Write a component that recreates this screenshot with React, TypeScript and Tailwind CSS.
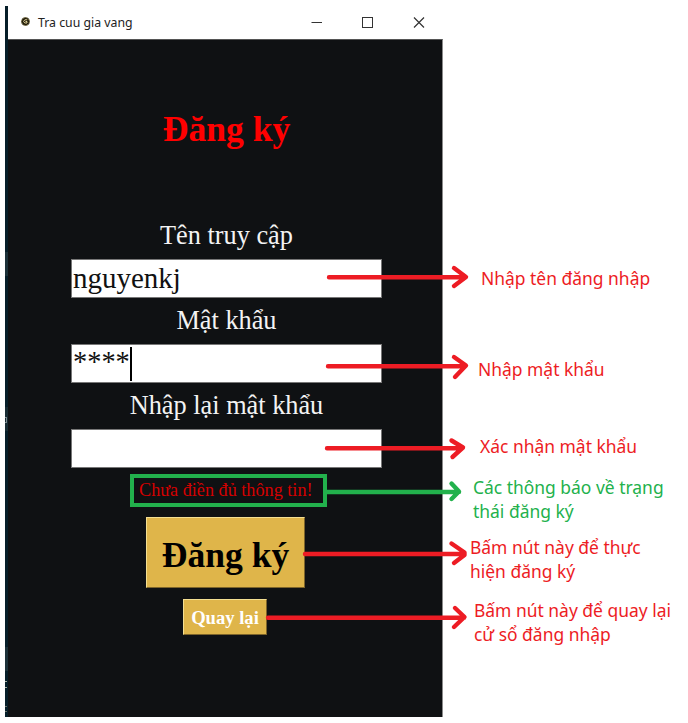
import React from "react";

const serif = "font-['Liberation_Serif',serif]";
const sans = "font-['Noto_Sans','Open_Sans',sans-serif]";

function TitleBar() {
  return (
    <div className="flex h-[33px] items-center bg-white pl-[13px]">
      <svg width="9" height="9" viewBox="0 0 9 9" className="mb-[3px]">
        <circle cx="4.5" cy="4.5" r="4.3" fill="#1b1708" />
        <circle cx="4.5" cy="4.5" r="3.9" fill="none" stroke="#c8b878" strokeWidth="0.7" strokeDasharray="2 1" />
        <path d="M6.3 2.8H3.8L2.6 4.4L3.7 6H6V4.5H4.5" fill="none" stroke="#e5d59b" strokeWidth="1" />
      </svg>
      <span className={`ml-[8px] whitespace-nowrap text-[12.3px] leading-4 text-[#222] ${sans}`}>
        Tra cuu gia vang
      </span>
      <svg width="116" height="12" viewBox="0 0 116 12" className="ml-auto mr-[17px]" fill="none" stroke="#333" strokeWidth="1">
        <path d="M1.5 5.5H12" />
        <rect x="52.5" y="0.5" width="10" height="10" />
        <path d="M104 0.5L114 10.5M114 0.5L104 10.5" strokeWidth="1.2" />
      </svg>
    </div>
  );
}

function Field({ label, children }: { label: string; children?: React.ReactNode }) {
  return (
    <div className="flex flex-col items-center">
      <div className={`flex h-[46px] items-center whitespace-nowrap text-[26.3px] text-[#f3f3f3] ${serif}`}>{label}</div>
      <div className={`flex h-[39px] w-[311px] items-center border border-[#777] bg-white pl-[1px] text-[29px] text-[#111] ${serif}`}>
        {children}
      </div>
    </div>
  );
}

function Note({ lines, className }: { lines: string[]; className: string }) {
  return (
    <div className={`flex flex-col items-start whitespace-nowrap text-[17.45px] leading-6 ${sans} ${className}`}>
      {lines.map((line) => (
        <span key={line}>{line}</span>
      ))}
    </div>
  );
}

function Arrows() {
  return (
    <svg className="pointer-events-none absolute left-0 top-0" width="688" height="723" fill="none" stroke="#ed1c24" strokeWidth="4.4" strokeLinecap="round" strokeLinejoin="round">
      <path d="M329 277.3H465M454 268L466 277L454 286" />
      <path d="M328 366.3H461M454 357L466 365.5L455 377" />
      <path d="M327 448.3H462M451.500 440.500L463 447.5L452.500 457" />
      <path d="M327 492H459M451.500 483.500L459 491.5L451.500 499" stroke="#22b14c" />
      <path d="M305 554H461M451.500 543.500L464.500 552.500V555L454 563" />
      <path d="M268 617.700H464M455 608L464.500 617L454 627" />
    </svg>
  );
}

export default function App() {
  return (
    <div className="relative flex h-[723px] w-[688px] overflow-hidden bg-white pl-[5px] pt-[6px]">
      <div className="flex h-[711px] w-[438px] shrink-0">
        <div className="flex w-[3px] flex-col overflow-hidden bg-[#061e29]">
          <div className="mt-[246px] h-6 shrink-0 bg-[#1b3038]" />
          <div className="mt-[131px] h-6 shrink-0 bg-[#172b33] pt-[10px]">
            <div className="h-[6px] w-[2px] border-y border-r border-[#7d8a90]" />
          </div>
          <div className="mt-[216px] h-6 shrink-0 bg-[#1b3038]" />
          <div className="mt-[10px] h-[7px] w-[2px] shrink-0 border-y border-[#a9b1a5]" />
          <div className="mt-[18px] h-[6px] w-[2px] shrink-0 border-y border-[#69716a]" />
        </div>
        <div className="flex min-w-0 flex-1 flex-col">
          <TitleBar />
          <main className="flex flex-1 flex-col items-center border-r border-t border-r-[#8a8a8a] border-t-[#555] bg-[#0f1113] pl-[3px]">
            <h1 className={`mt-[68px] whitespace-nowrap text-[35.6px] font-bold leading-[42px] text-[#ff0000] ${serif}`}>Đăng ký</h1>
            <div className="mt-[63px] flex flex-col">
              <Field label="Tên truy cập">nguyenkj</Field>
              <Field label="Mật khẩu">
                <span className="mb-[3px] text-[28.4px]">****</span>
                <span className="h-[34px] w-[2px] bg-black" />
              </Field>
              <Field label="Nhập lại mật khẩu" />
            </div>
            <div className={`mt-[6px] flex h-[33px] w-[197px] items-center self-start ml-[119px] whitespace-nowrap border-4 border-[#22b14c] pl-[5px] text-[18.2px] text-[#d40000] ${serif}`}>
              Chưa điền đủ thông tin!
            </div>
            <button className={`mr-[2px] mt-[10px] h-[71px] w-[159px] shrink-0 whitespace-nowrap border border-b-[#7d642a] border-l-[#f4df92] border-r-[#7d642a] border-t-[#f4df92] bg-[#dfb54a] pt-[5px] text-[35.6px] font-bold leading-10 text-black ${serif}`}>
              Đăng ký
            </button>
            <button className={`mr-[3px] mt-[11px] h-[36px] w-[84px] shrink-0 whitespace-nowrap border border-b-[#7d642a] border-l-[#f4df92] border-r-[#7d642a] border-t-[#f4df92] bg-[#dfb54a] pt-px text-[18.6px] font-bold leading-6 text-white ${serif}`}>
              Quay lại
            </button>
          </main>
        </div>
      </div>
      <aside className="flex flex-col items-start text-[#ed1c24]">
        <Note className="ml-[38px] mt-[260px]" lines={["Nhập tên đăng nhập"]} />
        <Note className="ml-[35px] mt-[67px]" lines={["Nhập mật khẩu"]} />
        <Note className="ml-[37px] mt-[53px]" lines={["Xác nhận mật khẩu"]} />
        <Note className="ml-[30px] mt-[17px] text-[#22b14c]" lines={["Các thông báo về trạng", "thái đăng ký"]} />
        <Note className="ml-[27px] mt-[12px]" lines={["Bấm nút này để thực", "hiện đăng ký"]} />
        <Note className="ml-[31px] mt-[15px]" lines={["Bấm nút này để quay lại", "cử sổ đăng nhập"]} />
      </aside>
      <Arrows />
    </div>
  );
}
